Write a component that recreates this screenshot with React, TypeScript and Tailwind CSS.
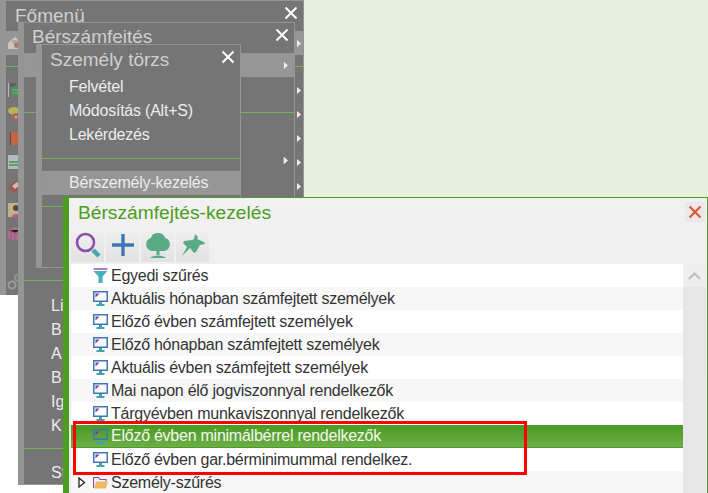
import type { ReactNode } from "react";

const font = "font-['Liberation_Sans',Arial,sans-serif]";

const listItems = [
  "Aktuális hónapban számfejtett személyek",
  "Előző évben számfejtett személyek",
  "Előző hónapban számfejtett személyek",
  "Aktuális évben számfejtett személyek",
  "Mai napon élő jogviszonnyal rendelkezők",
  "Tárgyévben munkaviszonnyal rendelkezők",
  "Előző évben minimálbérrel rendelkezők",
  "Előző évben gar.bérminimummal rendelkez.",
];

function CloseIcon() {
  return (
    <svg width="14" height="14" viewBox="0 0 14 14" className="block mb-[7px]">
      <path d="M1.5 1.5 12.5 12.5M12.5 1.5 1.5 12.5" stroke="#fff" strokeWidth="2" />
    </svg>
  );
}

function Arrow({ blue }: { blue?: boolean }) {
  return (
    <svg width="5" height="7" viewBox="0 0 5 7" className="block">
      {blue && <rect x="0" y="0" width="1" height="7" fill="#7aa7e0" />}
      <path d="M1 0 5 3.5 1 7Z" fill="#ffe9d8" />
    </svg>
  );
}

function Separator({ height = "h-[23px]" }: { height?: string }) {
  return (
    <div className={`${height} flex items-center`}>
      <div className="h-px w-full bg-[#74b257]" />
    </div>
  );
}

// small desaturated menu pictures, only the left part shows
function MenuPic({ kind }: { kind: number }) {
  const pics: ReactNode[] = [
    <g key="0"><path d="M1 8 8 2l7 6v6H1Z" fill="#d9d9d2" /><circle cx="10" cy="10" r="3" fill="#b56a60" /><path d="M5 5h5v3H5Z" fill="#a8b88a" /></g>,
    <g key="1"><rect x="1" y="1" width="1" height="14" fill="#cfcfcf" /><rect x="3" y="1" width="6" height="4" fill="#5a5a5a" /><circle cx="9" cy="9" r="5" fill="#3f9a5a" /><path d="M5 8h8M5 11h8" stroke="#7fc08f" /></g>,
    <g key="2"><ellipse cx="7" cy="5" rx="6" ry="4" fill="#c9c94e" /><ellipse cx="10" cy="11" rx="6" ry="4" fill="#b9655b" /><circle cx="9" cy="11" r="1" fill="#eee" /></g>,
    <g key="3"><rect x="3" y="2" width="2" height="13" fill="#444" /><rect x="4" y="2" width="11" height="13" fill="#e2622f" /></g>,
    <g key="4"><rect x="1" y="1" width="14" height="14" fill="#c6d6d4" /><path d="M2 8h12M2 11h12" stroke="#5eaa6a" strokeWidth="2" /></g>,
    <g key="5"><path d="M1 9 10 2l5 6-8 7Z" fill="#b5473e" /><path d="M5 8 10 4l3 3-5 4Z" fill="#d8d8d8" /></g>,
    <g key="6"><rect x="1" y="1" width="14" height="14" fill="#d8c88c" /><circle cx="9" cy="6" r="3" fill="#4a3a34" /><path d="M5 15c0-4 8-4 8 0Z" fill="#d84a9a" /></g>,
    <g key="7"><path d="M8 1 15 4v8l-7 3-7-3V4Z" fill="#c46a98" /><path d="M8 7v8M1 4l7 3 7-3M4 3v9" stroke="#a34f7c" /></g>,
    <g key="8"><circle cx="5" cy="11" r="3.500" fill="none" stroke="#a8a8a8" strokeWidth="2" /><circle cx="11" cy="4" r="3" fill="none" stroke="#9a9ab0" strokeWidth="2" /></g>,
  ];
  return (
    <svg width="16" height="16" viewBox="0 0 16 16" className="block shrink-0 opacity-75">
      {pics[kind]}
    </svg>
  );
}

function MainRow({ kind, arrow }: { kind?: number; arrow?: boolean }) {
  return (
    <div className="h-6 flex items-center justify-between pl-px pr-[2px]">
      {kind !== undefined ? <MenuPic kind={kind} /> : <span />}
      {arrow && <Arrow />}
    </div>
  );
}

function TextRow({ label, active }: { label?: string; active?: boolean }) {
  return (
    <div className={`h-6 flex items-center pl-[27px] text-[16px] tracking-[-0.22px] text-[#ececec] ${active ? "bg-[#969696]" : ""}`}>
      {label}
    </div>
  );
}

function ToolButton({ children }: { children: ReactNode }) {
  return (
    <div className="w-[33px] h-[34px] flex items-center justify-center bg-gradient-to-b from-[#f1f1f1] to-[#e1e1e1]">
      {children}
    </div>
  );
}

function MonitorIcon() {
  return (
    <svg width="15" height="15" viewBox="0 0 15 15" className="block shrink-0">
      <rect x="0.75" y="0.75" width="13.5" height="9.5" fill="none" stroke="#3f77b5" strokeWidth="1.5" />
      <path d="M2.5 2.5h4l-4 4Z" fill="#7b3fa0" />
      <rect x="6" y="11" width="3" height="2" fill="#3fa5ad" />
      <rect x="3.5" y="13" width="8" height="2" fill="#3fa5ad" />
    </svg>
  );
}

function FilterIcon() {
  return (
    <svg width="15" height="15" viewBox="0 0 15 15" className="block shrink-0">
      <rect x="0.5" y="0" width="14" height="2" fill="#b07cc6" />
      <path d="M0.5 3h14L9.5 8.5V15h-4V8.5Z" fill="#45b0b8" />
    </svg>
  );
}

function FolderIcon() {
  return (
    <svg width="15" height="13" viewBox="0 0 15 13" className="block shrink-0">
      <path d="M0.5 12V1.5h5l1.5 2h6v2" fill="none" stroke="#8a4fa8" strokeWidth="1.2" />
      <path d="M1 12.5 3 5.5h12l-2 7Z" fill="#f0b866" />
    </svg>
  );
}

export default function App() {
  return (
    <div className={`relative w-[708px] h-[493px] overflow-hidden bg-white ${font}`}>
      <div className="absolute left-[304px] top-0 w-[404px] h-[200px] bg-[#e6f0df]" />

      {/* Főmenü */}
      <div className="absolute left-0 top-0 w-[304px] h-[295px] bg-[#757575] border-l-[6px] border-t border-r border-[#959595]">
        <div className="h-[30px] flex items-center justify-between pl-[9px] pr-[5px]">
          <span className="text-[19px] text-[#cfcfcf]">Főmenü</span>
          <CloseIcon />
        </div>
        <div className="bg-[#969696]"><MainRow kind={0} arrow /></div>
        <Separator />
        <MainRow kind={1} arrow />
        <MainRow kind={2} arrow />
        <MainRow kind={3} arrow />
        <MainRow kind={4} arrow />
        <MainRow kind={5} arrow />
        <MainRow kind={6} arrow />
        <MainRow kind={7} arrow />
        <MainRow />
        <MainRow kind={8} />
      </div>

      {/* Bérszámfeités */}
      <div className="absolute left-[18px] top-[22px] w-[277px] h-[463px] bg-[#757575] border-l-[6px] border-t border-r border-b border-[#959595]">
        <div className="h-[30px] flex items-center justify-between pl-[8px] pr-[5px]">
          <span className="text-[19px] text-[#cfcfcf] mb-[1px]">Bérszámfeités</span>
          <CloseIcon />
        </div>
        <div className="h-6 flex items-center justify-end pr-[6px] bg-[#969696]"><Arrow blue /></div>
        <div className="h-6" />
        <Separator />
        <div className="h-6" />
        <div className="h-6 flex items-center justify-end pr-[6px]"><Arrow blue /></div>
        <div className="h-[97px]" />
        <Separator />
        <div className="h-[2px]" />
        <div className="text-[16px] text-[#ececec] pl-[27px]">
          {["Li", "B", "A", "B", "Ig", "K"].map((t, i) => (
            <div key={i} className="h-6 flex items-center">{t}</div>
          ))}
          <div className="h-[10px]" />
        </div>
        <Separator height="h-px" />
        <div className="text-[16px] text-[#ececec] pl-[27px] pt-[12px]">
          <div className="h-6 flex items-center">St</div>
        </div>
      </div>

      {/* Személy törzs */}
      <div className="absolute left-[36px] top-[44px] w-[205px] h-[224px] bg-[#757575] border-l-[6px] border-t border-r border-b border-[#959595]">
        <div className="h-[30px] flex items-center justify-between pl-[8px] pr-[5px]">
          <span className="text-[19px] text-[#cfcfcf]">Személy törzs</span>
          <CloseIcon />
        </div>
        <TextRow label="Felvétel" />
        <TextRow label="Módosítás (Alt+S)" />
        <TextRow label="Lekérdezés" />
        <Separator height="h-[22px] mb-[2px]" />
        <TextRow label="Bérszemély-kezelés" active />
        <Separator />
      </div>

      {/* Bérszámfejtés-kezelés */}
      <div className="absolute left-[63px] top-[197px] w-[645px] h-[296px] bg-gradient-to-b from-[#f1f1f1] to-[#ebebeb] border-l-[6px] border-t border-r border-[#4c9d22]">
        <div className="h-[30px] flex items-center justify-between pl-[9px] pr-[2px]">
          <span className="text-[19.2px] text-[#4c9d22]">Bérszámfejtés-kezelés</span>
          <div className="w-5 h-5 mt-[-3px] flex items-center justify-center bg-[#e9e9e9]">
            <svg width="14" height="14" viewBox="0 0 14 14" className="block">
              <path d="M1.5 1.5 12.5 12.5M12.5 1.5 1.5 12.5" stroke="#d9583a" strokeWidth="2.2" />
            </svg>
          </div>
        </div>
        <div className="flex gap-[2px] pl-[2px]">
          <ToolButton>
            <svg width="26" height="26" viewBox="0 0 26 26">
              <circle cx="10.500" cy="10.500" r="8.500" fill="none" stroke="#8c50ad" strokeWidth="2.600" />
              <path d="M18 18 24 24" stroke="#45aab0" strokeWidth="4.500" />
            </svg>
          </ToolButton>
          <ToolButton>
            <svg width="24" height="24" viewBox="0 0 24 24">
              <path d="M12 1v22M1 12h22" stroke="#3f77b5" strokeWidth="3.400" />
            </svg>
          </ToolButton>
          <ToolButton>
            <svg width="24" height="25" viewBox="0 0 24 25">
              <path d="M12 0c4.500 0 6.500 2.500 7 5 2.800.6 4.800 3 4.800 6.200 0 4-3 6.800-6.800 6.800H7c-3.800 0-6.800-2.800-6.800-6.800C.2 8 2.200 5.600 5 5c.5-2.500 2.500-5 7-5Z" fill="#5aaa85" />
              <path d="M10.500 16h3v6h-3Z" fill="#5aaa85" />
              <path d="M4 25c3-3.500 13-3.500 16 0Z" fill="#5aaa85" />
            </svg>
          </ToolButton>
          <ToolButton>
            <svg width="24" height="23" viewBox="0 0 24 23">
              <path d="M14 0 17 3 16 5 23 8 24 10 19 11 15 18 13 19 9 14 1 22 6 13 2 9 3 7 11 6 13 5Z" fill="#5aaa85" />
            </svg>
          </ToolButton>
        </div>
        <div className="flex mt-[2px] pl-[2px]">
          <div className="w-[612px] text-[16px] tracking-[-0.25px] text-[#333]">
            <div className="h-[23px] bg-white flex items-center gap-[3px] pl-[22px]">
              <FilterIcon />
              <span>Egyedi szűrés</span>
            </div>
            {listItems.map((item, i) => (
              <div
                key={item}
                className={
                  i === 6
                    ? "h-[23px] flex items-center gap-[3px] pl-[22px] bg-gradient-to-b from-[#4a9a20] to-[#6cae47] border-b border-[#4c9d22] text-[#f2f8ec]"
                    : `h-[23px] flex items-center gap-[3px] pl-[22px] ${i % 2 === 0 ? "bg-[#f7f7f7]" : "bg-white"}`
                }
              >
                <MonitorIcon />
                <span>{item}</span>
              </div>
            ))}
            <div className="h-[23px] bg-[#f7f7f7] flex items-center pl-[7px]">
              <svg width="8" height="11" viewBox="0 0 8 11" className="block mr-[7px]">
                <path d="M1 1 6.500 5.500 1 10Z" fill="#fff" stroke="#222" strokeWidth="1.300" />
              </svg>
              <FolderIcon />
              <span className="ml-[3px]">Személy-szűrés</span>
            </div>
          </div>
          <div className="w-[23px] bg-[#e7e7e7]">
            <div className="h-[23px] flex items-center justify-center bg-[#eeeeee]">
              <svg width="13" height="8" viewBox="0 0 13 8">
                <path d="M1 7 6.500 1.500 12 7" fill="none" stroke="#bdbdbd" strokeWidth="2" />
              </svg>
            </div>
          </div>
        </div>
      </div>

      {/* red marking on the screenshot */}
      <div className="absolute left-[73px] top-[421px] w-[454px] h-[54px] border-[3px] border-[#ff0000]" />
    </div>
  );
}
